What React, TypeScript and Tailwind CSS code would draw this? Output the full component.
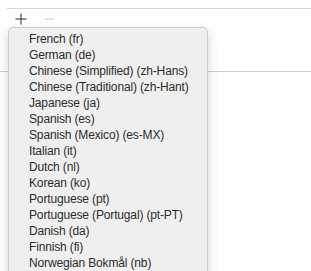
const languages = [
  "French (fr)",
  "German (de)",
  "Chinese (Simplified) (zh-Hans)",
  "Chinese (Traditional) (zh-Hant)",
  "Japanese (ja)",
  "Spanish (es)",
  "Spanish (Mexico) (es-MX)",
  "Italian (it)",
  "Dutch (nl)",
  "Korean (ko)",
  "Portuguese (pt)",
  "Portuguese (Portugal) (pt-PT)",
  "Danish (da)",
  "Finnish (fi)",
  "Norwegian Bokmål (nb)",
];

export default function App() {
  return (
    <div className="relative w-[311px] h-[271px] overflow-hidden bg-white font-['Liberation_Sans',Arial,sans-serif]">
      <div className="ml-[7px] mt-[8px] h-px bg-[#d4d4d4]" />
      <div className="flex items-center h-[19px] pl-[15px] gap-[17px]">
        <svg width="12" height="12" viewBox="0 0 12 12">
          <path d="M6 0.5V11.5M0.5 6H11.5" stroke="#2a2a2a" strokeWidth="1" />
        </svg>
        <svg width="11" height="12" viewBox="0 0 11 12">
          <path d="M0.5 6H10.5" stroke="#c8c8c8" strokeWidth="1" />
        </svg>
      </div>
      <div className="mt-[43px] h-px bg-[#cfcfcf]" />

      {/* popup menu */}
      <div className="absolute left-[8px] top-[27px] w-[200px] h-[260px] rounded-[5px] border border-[#cdcdcd] bg-[#efefef] pt-[3px] shadow-[0_4px_12px_rgba(0,0,0,0.18)]">
        {languages.map((lang) => (
          <div key={lang} className="h-4 pl-[20px] text-[12px] leading-4 tracking-[-0.15px] text-[#2b2b2b] whitespace-nowrap">
            {lang}
          </div>
        ))}
      </div>
    </div>
  );
}
